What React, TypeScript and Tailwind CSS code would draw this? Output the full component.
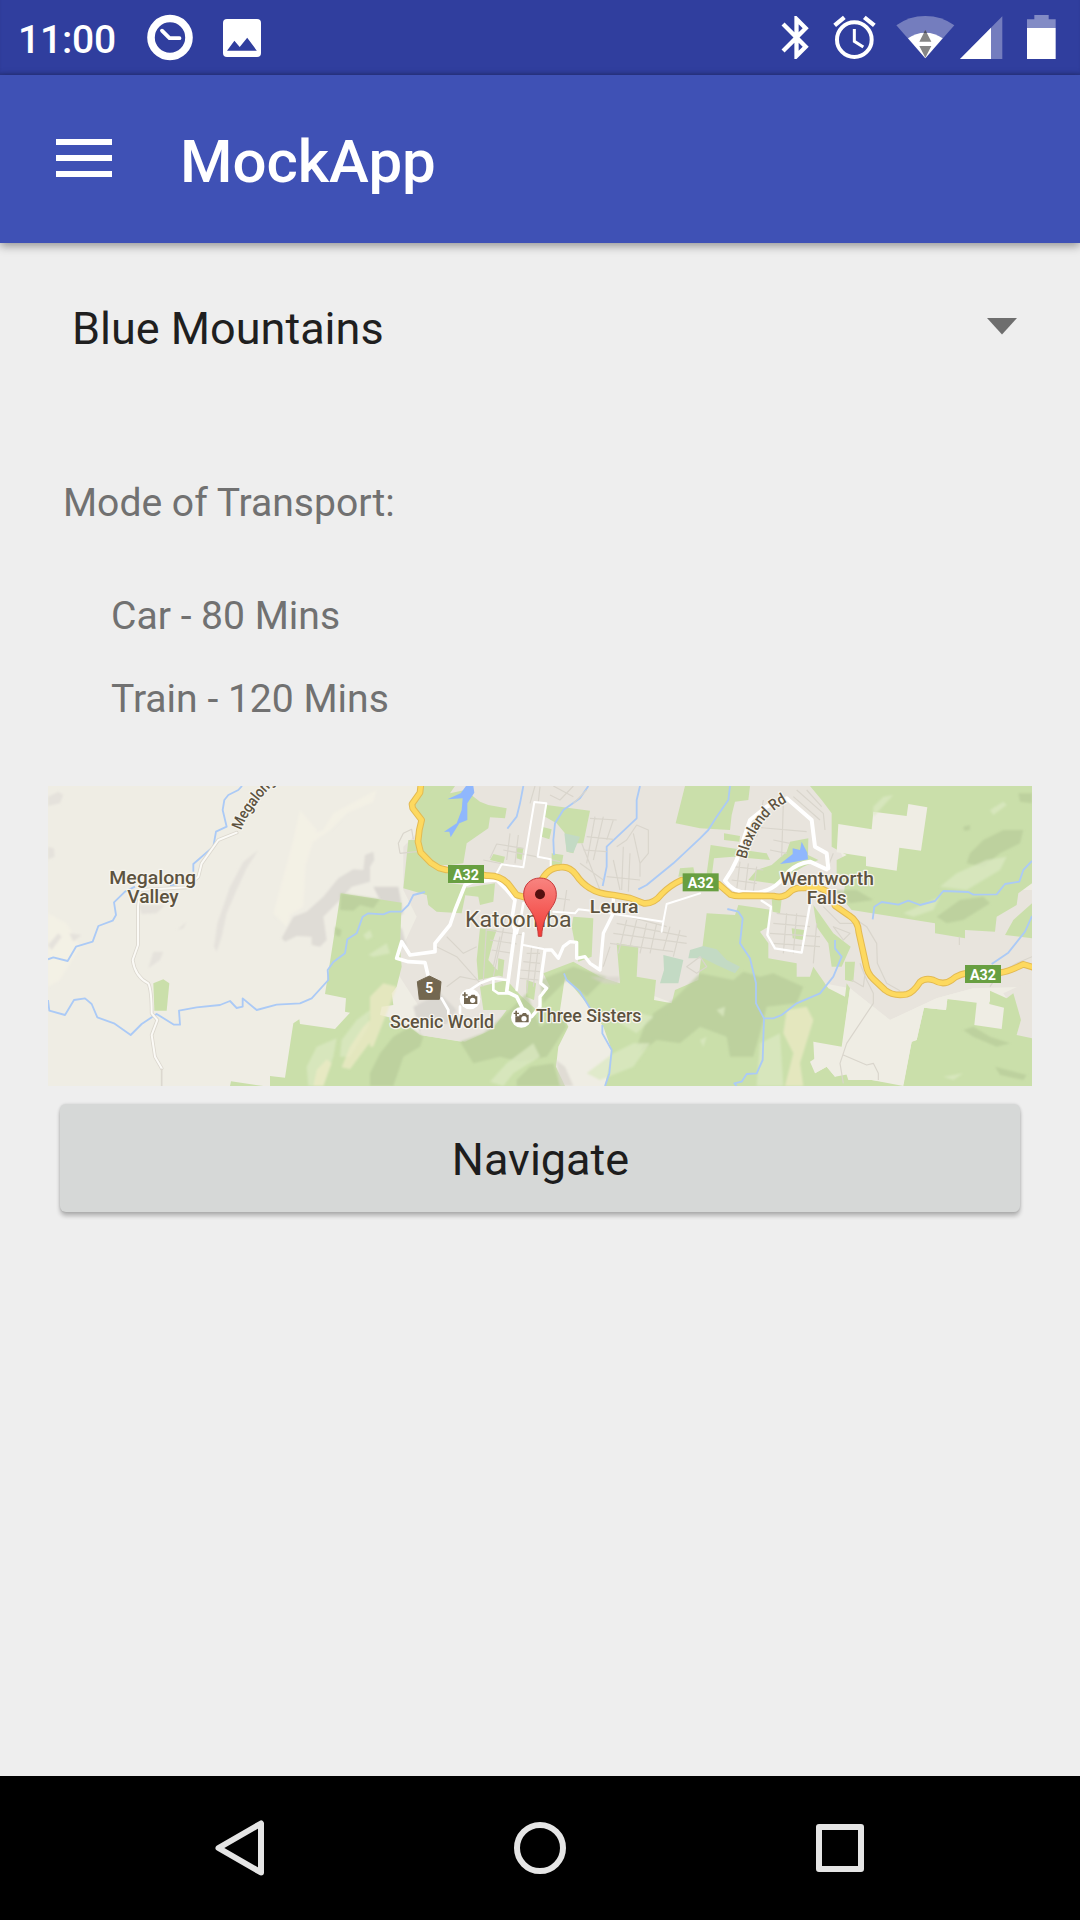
import React from "react";

function StatusBar() {
  return (
    <div className="flex h-[75px] items-start bg-[#303e9e] text-white shadow-[inset_0_-3px_3px_-1px_rgba(0,0,0,0.14)]">
      <span className="ml-[18px] mt-[15px] w-[100px] whitespace-nowrap text-[39px] font-medium leading-[50px] tracking-[-0.2px]">11:00</span>
      <svg className="ml-[28px] h-[75px] w-[48px]" viewBox="146 0 48 75" fill="none" stroke="#fff">
        <circle cx="170" cy="37.5" r="19" strokeWidth="7.6" />
        <path d="M162 30.7 169.5 38.2H179.5" strokeWidth="3.8" strokeLinecap="round" strokeLinejoin="round" />
      </svg>
      <svg className="ml-[28px] h-[75px] w-[40px]" viewBox="222 0 40 75">
        <rect x="223" y="19" width="38" height="38" rx="4" fill="#fff" />
        <path d="M227 50.7 234.4 40.7 239.7 47 247.2 37.7 256.8 50.7z" fill="#303e9e" />
      </svg>
      <div className="ml-auto mr-[24px] flex">
        <svg className="mr-[24px] h-[75px] w-[28px]" viewBox="64 0 84 225" fill="#fff">
          <path transform="translate(33.5 35.5) scale(6.42)" d="M17.71 7.71 12 2h-1v7.59L6.41 5 5 6.41 10.59 12 5 17.59 6.41 19 11 14.41V22h1l5.71-5.71-4.3-4.29 4.3-4.29zM13 5.83l1.88 1.88L13 9.59V5.83zm1.88 10.46L13 18.17v-3.76l1.88 1.88z" />
        </svg>
        <svg className="mr-[20px] h-[75px] w-[43px]" viewBox="219 0 129 225" fill="none" stroke="#fff">
          <circle cx="283" cy="119" r="52" strokeWidth="12" />
          <path d="M283 87V124L310 141" strokeWidth="9" />
          <path d="M224 76 253 52M313 52 343 76" strokeWidth="13" />
        </svg>
        <svg className="mr-[5px] h-[75px] w-[59px]" viewBox="407 0 177 225">
          <path d="M495 175 408 76Q446 48 495 48T582 76z" fill="#fff" opacity=".33" />
          <path d="M495 175 443 115Q466 98 495 98T547 115z" fill="#fff" />
          <path d="M495 90 513 125H477zM477 138H513L495 173z" fill="#858585" />
          <path d="M495 90 500 99H490z" fill="#4b4d66" />
        </svg>
        <svg className="mr-[24px] h-[75px] w-[43px]" viewBox="598 0 129 225" fill="#fff">
          <path d="M598 177 725 49V177z" opacity=".33" />
          <path d="M598 177 691 83V177z" />
        </svg>
        <svg className="h-[75px] w-[29px]" viewBox="801 0 87 225" fill="#fff">
          <path d="M823 45H866V58H887V84H801V58H823z" opacity=".4" />
          <path d="M801 84H887V177H801z" />
        </svg>
      </div>
    </div>
  );
}

const HIGHWAY_WEST =
  "M1143 10 1140 38 1116 72 1118 85 1145 120 1138 150 1134 185 1142 217 1172 248 1197 264 1220 270H1270L1340 287Q1380 285 1405 312L1430 345 1460 353";
const HIGHWAY_MID =
  "M1500 310Q1522 262 1560 262 1588 257 1608 284 1625 310 1650 325 1675 342 1720 345L1770 354 1812 370Q1842 372 1865 342 1890 316 1925 300L2035 312 2072 344Q2090 350 2110 347L2200 348Q2230 356 2248 338 2262 322 2290 324L2335 322 2362 334";
const HIGHWAY_EAST =
  "M2385 377 2428 407Q2454 423 2456 455L2478 555Q2482 580 2500 597L2535 630Q2560 650 2600 643 2620 638 2640 606 2655 593 2680 600 2710 618 2735 600 2760 578 2800 578H2880Q2905 575 2950 553L2980 562";

function Terrain() {
  return (
    <>
      <rect x="24" y="18" width="2952" height="900" fill="#efede4" />
      {/* built-up areas */}
      <path fill="#e8e4dd" d="M1150 18H2330L2385 100 2395 200 2450 330 2976 330V620L2800 625 2690 655 2550 720 2430 625 2300 600 2130 560 1980 610 1900 670 1740 610 1600 560 1480 740 1270 785 1140 765 1150 700 1060 560 1130 410 1090 330 1090 200 1140 150z" />
      <path fill="#e8e4dd" d="M2890 640 2976 600V790L2930 765 2943 720z" />
      {/* west hills */}
      <g filter="url(#soft)">
        <path fill="#f5f2e6" d="M1010 30 1000 65 920 100 870 150 800 200 790 380 740 410 735 360 765 200 800 170 850 150 880 100zM24 400 80 430 120 500 60 600 24 620zM700 400 760 180 780 90 830 150 740 440z" opacity=".7" />
        <path fill="#e5e2dc" d="M24 50 55 35 70 45 60 70 24 78zM24 200 42 205 44 230 24 238zM655 210 620 265 590 330 560 400 545 470 530 515 522 500 532 430 570 320 610 245zM24 495 55 460 65 470 35 510zM88 460 125 465 100 485zM340 515 370 515 360 540 325 565zM295 375 375 375 350 400 305 402zM412 450 440 425 430 445z" />
        <path fill="#dfdcd6" d="M725 475 760 410 800 395 850 350 895 295 940 268 970 270 975 225 1000 215 1003 240 990 260 990 305 935 320 900 360 850 410 860 480 840 500 815 495 815 470 770 468 735 485z" />
        <path fill="#dad7d1" d="M1000 320 1075 320 1090 400 1060 420 1020 360zM1050 440 1085 445 1100 500 1060 490zM1120 680 1200 640 1250 690 1200 760 1140 760z" />
      </g>
      {/* forests */}
      <g fill="#cadfaa">
        <path d="M1145 18H1245L1230 40 1275 30 1320 65 1345 75 1400 85 1395 115 1350 112 1345 145 1280 190 1270 250 1230 255 1190 255 1140 215 1145 130 1115 80z" />
        <path d="M1105 180 1140 180 1145 220 1195 265 1225 275V310L1280 315 1275 350 1265 400 1190 395 1165 375 1160 345 1090 325z" />
        <path d="M1270 325 1365 310 1360 365 1320 375 1315 350 1270 345zM1350 240 1360 222 1395 230 1390 250zM1430 200 1450 205 1445 240 1430 235z" />
        <path d="M1520 75 1650 92 1630 190 1608 190 1600 220 1580 215 1575 160 1550 130 1515 110zM1505 140 1535 148 1528 178 1505 170zM1535 220 1570 225 1565 255 1535 255z" />
        <path d="M1935 18H2130L2125 60 2085 65 2075 105 2070 150 1980 145 1907 130z" />
        <path d="M1600 410 1660 415 1655 530 1615 545 1595 440zM1320 445 1370 450 1360 480 1345 540 1385 585 1315 600 1310 540zM1375 535 1393 540 1388 590 1372 585zM1460 600 1488 610 1482 660 1458 650z" />
        <path d="M1920 265 1960 262 1965 285 1915 290zM2052 160 2100 168 2098 185 2052 180zM2012 195 2180 220 2190 240 2080 230 2022 235 2015 290 2000 280z" />
        <path d="M2125 300 2150 270 2195 255 2240 215 2250 185 2305 175 2304 225 2335 240 2290 260 2240 290 2210 312zM2195 355 2225 358 2220 400 2198 395zM2320 375 2380 460 2432 500 2405 560 2375 560 2365 490 2330 440zM2255 445 2292 450 2288 480 2258 475zM2415 545 2445 545 2440 605 2415 600z" />
        <path d="M2310 18H2976V310L2935 340 2930 375 2870 410 2865 455 2775 450V475L2685 460V430L2435 390 2410 360 2415 310 2390 300 2390 240 2420 225 2375 200V100L2345 60z" />
        <path d="M2895 465 2920 420 2976 370V475z" />
        <path d="M340 610 370 598 388 610 380 692H343z" />
        <path d="M570 918 573 904 670 918zM690 918V888L735 893 760 730 778 718 780 732 885 747 930 698 915 695 918 655 855 642 902 340 1085 368 1080 500 1085 560 1070 620 1055 640 1060 675 1025 680 1020 705 1080 720 1140 765 1265 785 1280 740 1360 745 1400 690 1330 690 1320 620 1400 600 1440 645 1500 700 1500 640 1530 620 1510 580 1600 545 1680 590 1740 610 1730 490 1795 500 1790 590 1848 600 1842 660 1895 670 1905 630 1975 600 1980 560 2000 400 2085 405 2095 375 2195 390 2185 440 2160 455 2185 490V535L2270 550V590H2310L2320 560 2365 625 2415 650 2420 610 2430 625 2405 820 2320 785 2355 815 2310 845 2325 880 2360 860 2385 890 2415 870 2425 900 2495 900 2590 918z" />
        <path d="M2590 918 2615 785 2630 780 2652 683 2718 690 2722 657 2810 668 2803 735 2885 747 2892 683 2848 672 2850 632 2900 655 2920 640 2943 720 2930 765 2976 775V918z" />
      </g>
      {/* clearings */}
      <path fill="#efede4" d="M2395 132 2495 148 2500 95 2600 108 2605 72 2662 82 2643 212 2578 203 2570 272 2478 258V230L2390 217zM2430 625 2550 720 2690 655 2800 625 2850 632V665L2722 657 2718 690 2652 683 2630 780 2615 785 2590 912 2495 900 2485 870 2440 880 2385 890 2360 860 2325 880 2320 785 2405 800z" />
      <path fill="#efede4" d="M1575 590 1560 690 1585 740 1555 800 1548 860 1575 918H1695L1715 810 1690 740 1640 670z" />
      <path fill="#e8e4dd" d="M1260 740 1365 745 1275 785 1140 765 1145 720z" />
      {/* relief */}
      <g filter="url(#soft)">
        <g fill="#b4c896" opacity=".6">
          <path d="M902 340 1020 358 1000 385 960 375 940 392 900 390zM885 440 905 450 900 470 885 465z" />
          <path d="M990 918V880L1020 820 1060 770 1110 740 1150 770 1140 800 1090 830 1060 918z" />
          <path d="M1260 785 1330 760 1400 700 1460 640 1500 740 1560 700 1580 740 1520 830 1440 845 1380 830 1300 850z" />
          <path d="M1430 900 1470 860 1540 850 1560 918H1430zM1500 600 1600 560 1700 590 1640 650 1580 600 1510 670z" />
          <path d="M1840 700 1900 660 1980 580 2080 600 2110 575 2160 590 2200 580 2290 620 2270 670 2180 680 2160 760 2140 830 2070 830 2060 770 1980 740 1920 790 1850 780 1800 820z" />
          <path d="M2790 220 2830 180 2890 150 2950 150 2940 190 2880 220 2830 260 2780 250zM2690 410 2760 360 2830 350 2850 370 2770 420 2720 430zM2370 330 2450 330 2500 360 2430 370zM2770 140 2790 135 2790 150 2772 152z" />
          <path d="M2770 750 2800 740 2850 770 2910 790 2870 800 2800 770zM2865 860 2960 885 2950 900 2880 885zM1820 720 1900 700 1900 740 1790 800zM2935 40 2976 40V70L2940 65z" />
        </g>
        <g fill="#dbe9c2" opacity=".75">
          <path d="M800 860 830 800 890 775 880 830 850 918H805zM905 780 950 720 990 690 985 740 930 830 900 830zM970 465 990 450 998 470 980 480zM985 525 1040 490 1050 520 1000 530z" />
          <path d="M1350 905 1400 850 1480 790 1500 830 1420 880 1390 918zM1640 880 1720 820 1780 790 1830 790 1780 860 1680 900zM1740 730 1800 700 1840 710 1790 760z" />
          <path d="M2160 790 2220 760 2230 918H2150zM2030 690 2055 680 2050 710zM2500 80 2530 50 2560 45 2500 110zM2700 320 2750 280 2840 240 2900 230 2880 270 2780 330zM2590 400 2700 350 2680 390 2620 410zM2850 90 2890 65 2900 75 2860 105zM2710 890 2770 880 2740 900zM1980 780 2000 770 1990 800z" />
        </g>
        <g fill="#eceac6" opacity=".75">
          <path d="M820 918 830 870 860 838 875 850 850 918zM905 862 930 800 970 740 1020 690V750L980 800 930 868zM2240 690 2300 680 2320 720 2280 850 2290 918H2235L2260 820 2230 760z" />
          <path d="M990 650 1030 610 1070 620 1040 700 1000 800 990 800z" />
        </g>
        <path fill="#d5d0c9" opacity=".6" d="M1650 590 1740 590 1735 612 1690 610zM1548 840 1575 860 1600 918H1560z" />
      </g>
      {/* gardens */}
      <path fill="#c3dac4" d="M1870 525 1930 540 1915 610 1860 610 1872 570zM1950 510 1990 498 2030 508 2060 540 2100 560 2085 580 2030 555 1990 535 1945 535zM1573 160 1620 170 1600 218 1580 215z" />
    </>
  );
}

function Water() {
  return (
    <>
      <path fill="#8fb7fd" d="M1278 18H1300L1303 38 1282 70 1282 120 1258 130 1232 172 1228 155 1212 155 1250 130 1265 90 1268 55 1222 58 1262 40zM2220 252 2258 222 2258 205 2280 210 2285 185 2302 218 2304 238 2250 248z" />
      <g fill="none" stroke="#abcaf6" strokeWidth="5.5" strokeLinejoin="round">
        <path d="M606 18 595 30 565 45 553 60 548 90 560 140 528 155 520 200 460 252V275M415 312 390 316M285 320 255 335 222 367 228 405 218 422 175 438 158 485 108 500 83 543 40 532 24 538" />
        <path d="M24 660 28 692 75 705 102 660 135 655 155 672 172 712 222 730 272 765 305 732 350 702 402 734H420L417 692 470 682 540 675 570 663 590 684 608 680V655L650 690 710 674 780 670 815 655 865 600 863 570 880 546 915 520 922 478 950 460 968 410 985 400 1030 403 1050 395 1085 395 1105 375 1120 345 1155 336" />
        <path d="M1450 18 1440 70 1430 110 1402 146M1645 18 1620 55 1570 90 1545 130 1540 180 1542 225M1800 18 1790 60V115L1700 200V260L1688 318M2070 18 2065 60 2030 110 2005 150 1980 175 1900 250 1820 315 1795 328" />
        <path d="M1572 580 1580 600 1620 635 1650 685M1687 735V760L1715 810 1708 880 1695 918" />
        <path d="M2062 387 2095 395 2108 415 2100 490 2130 535 2148 610V670L2172 715 2200 715 2225 705 2270 670 2340 640 2380 590 2405 530 2385 505V480M2172 715 2168 840 2150 880 2120 882 2105 905 2083 910 2090 918" />
        <path d="M2498 418 2503 380 2525 366 2575 374 2605 362 2640 375 2685 363 2710 333 2785 336 2800 344 2870 343 2895 312 2938 305 2950 270 2976 243M2855 552 2905 518 2955 455 2976 408" />
      </g>
    </>
  );
}

function Roads() {
  return (
    <>
      <g fill="none" stroke="#d9d5cc" strokeWidth="3.5" strokeLinejoin="round">
        <path d="M1080 220 1075 190 1090 160 1115 148 1120 178M1130 215 1080 220M1350 235 1370 192 1450 205M1330 240 1440 262M1410 160 1400 240M1435 165 1425 250M1390 210 1560 245M1600 18 1560 60 1530 45M1640 30 1600 70M1540 18 1600 50M1485 18 1470 70M1500 20 1495 65" />
        <path d="M1650 115 1730 120M1665 110 1640 250M1690 110 1660 240M1720 120 1700 180M1640 170 1720 178M1630 210 1700 215M1620 250 1690 300M1625 190 1680 330M1730 200 1760 180 1790 135 1825 150 1825 220 1800 250 1800 290M1720 240 1740 330M1750 200 1745 330M1770 220 1765 335M1700 290 1800 300M1780 160 1800 250" />
        <path d="M1340 450 1450 465M1350 480 1430 492M1355 510 1420 520M1340 430 1330 600M1400 400 1360 590M1380 470 1360 560M1220 470 1270 520 1310 500M1190 500 1250 530 1330 620M1460 520 1500 520M1450 545 1500 550M1440 570 1500 575M1440 595 1495 600M1475 500 1460 640M1495 500 1480 620M1220 620 1260 590 1310 600" />
        <path d="M1730 400 1880 440M1730 430 1940 470M1720 460 1940 490M1710 490 1900 515M1760 420 1735 520M1790 420 1770 500M1820 430 1800 520M1850 430 1830 520M1890 440 1870 510M1920 450 1900 530M1580 330 1570 400M1520 350 1590 360M1710 500 1690 560M1940 560 1980 530 2000 560 1970 580z" />
        <path d="M2130 140 2300 155M2170 60 2150 170M2230 70 2225 230M2200 180 2250 190M2190 210 2240 220M2080 260 2170 270M2075 300 2150 310M2100 245 2090 330M2125 250 2115 335M2150 260 2140 335M2210 400 2300 410M2200 430 2310 440M2190 460 2340 470M2200 490 2340 500M2240 400 2230 520M2270 400 2260 520M2330 430 2320 550M2270 30 2350 100 2355 150M2300 30 2345 80M2260 50 2340 120M2380 220 2360 270M2350 380 2400 430 2440 430M2380 440 2430 460 2410 480z" />
        <path d="M2450 420 2480 440 2510 490 2512 550 2540 610 2580 632M2460 550 2480 600 2500 640V670L2420 790 2400 850 2410 910M2410 825 2480 855 2500 850 2515 880V900M2435 600 2470 620 2475 580M2830 600 2880 580 2930 550 2976 530M2758 470V495M2850 620 2870 590" />
      </g>
      <g fill="none" strokeLinejoin="round" strokeLinecap="round">
        <path stroke="#dcd8cf" strokeWidth="11" d="M590 158 535 180 485 250 475 290 440 322 300 330 294 380V495L278 540Q285 590 325 610 335 630 335 700L352 720 335 765 345 830 365 865" />
        <path stroke="#fbfaf6" strokeWidth="6" d="M590 158 535 180 485 250 475 290 440 322 300 330 294 380V495L278 540Q285 590 325 610 335 630 335 700L352 720 335 765 345 830 365 865" />
        <path stroke="#dcd8cf" strokeWidth="5" d="M365 868V918" />
        <g stroke="#fff" strokeWidth="12">
          <path d="M1165 590 1155 548 1105 545 1070 535 1085 485 1110 525 1185 515 1185 490 1230 435 1245 390 1275 315 1300 305 1370 300 1400 330 1425 360 1415 420 1425 450 1400 635 1430 650 1450 690" strokeWidth="11" />
          <path d="M1290 630 1320 610 1360 595 1400 600M1360 600V630L1375 640 1410 640M1430 460 1445 400 1450 370M1450 460 1430 630M1205 655 1225 690V705M1260 700V680" strokeWidth="8" />
          <path d="M1475 710 1500 680V650L1520 625 1502 610 1505 580 1515 510 1535 510 1555 535 1570 500 1590 485 1610 487V535L1635 530 1650 550 1680 570 1690 460 1720 400V355" strokeWidth="10" />
          <path d="M1370 280 1385 253 1450 262 1483 66 1519 70 1493 230 1532 238V260M1450 495 1510 507M1540 395 1605 400 1615 388 1680 395 1870 425 1880 372 1980 340M1870 425 1865 455" strokeWidth="6" />
          <path d="M2055 302 2075 270 2090 240 2130 120 2180 80 2240 55 2315 120 2325 200 2360 220 2365 265M2055 302Q2080 338 2120 337 2180 345 2220 305L2245 275Q2270 250 2310 245L2360 268" />
          <path d="M2165 362 2193 380 2182 465 2205 505 2285 518 2312 360" strokeWidth="7" />
        </g>
        <g stroke="#e3ba52" strokeWidth="20"><path d={HIGHWAY_WEST} /><path d={HIGHWAY_MID} /><path d={HIGHWAY_EAST} /></g>
        <g stroke="#fdd95f" strokeWidth="14"><path d={HIGHWAY_WEST} /><path d={HIGHWAY_MID} /><path d={HIGHWAY_EAST} /></g>
      </g>
    </>
  );
}

function Shield({ x, y }: { x: number; y: number }) {
  return (
    <g>
      <rect x={x} y={y} width="108" height="54" fill="#689f41" />
      <text x={x + 54} y={y + 44} textAnchor="middle" fontSize="46" fontWeight="700" fill="#fff" textLength="78" lengthAdjust="spacingAndGlyphs">A32</text>
    </g>
  );
}

function Camera({ x, y }: { x: number; y: number }) {
  return (
    <g transform={`translate(${x} ${y})`}>
      <circle r="31" fill="#fff" />
      <path fill="#736751" fillRule="evenodd" d="M-18 12V-3H-6V-8H1L5-13H14L17-8H22V15H-18zM8-4A8 8 0 1 0 8 12 8 8 0 1 0 8-4zM-18-20H-13V-14H-7V-10H-13V-4H-18V-10H-23V-14H-18z" />
    </g>
  );
}

function MapView() {
  return (
    <svg className="block h-[300px] w-[984px]" viewBox="24 18 2952 900">
      <defs>
        <filter id="soft"><feGaussianBlur stdDeviation="3" /></filter>
        <linearGradient id="pin" x1="0" y1="0" x2="0" y2="1">
          <stop offset="0" stopColor="#f88480" />
          <stop offset="1" stopColor="#f23b36" />
        </linearGradient>
        <path id="megalong" d="M604 152Q620 95 708 5" />
        <path id="blaxland" d="M2119 238Q2150 112 2245 64" />
      </defs>
      <Terrain />
      <Water />
      <Roads />
      <Shield x={1224} y={255} />
      <Shield x={1928} y={280} />
      <Shield x={2775} y={555} />
      <path d="M1168 588 1203 605 1198 658H1138L1132 605z" fill="#736750" stroke="#736750" strokeWidth="3" strokeLinejoin="round" />
      <text x="1168" y="639" textAnchor="middle" fontSize="42" fontWeight="700" fill="#fff">5</text>
      <Camera x={1290} y={657} />
      <Camera x={1444} y={712} />
      <g fill="#5d5340" stroke="#f7f5ef" strokeWidth="8" strokeLinejoin="round" className="[paint-order:stroke]" fontWeight="500" fontSize="57">
        <text x="208" y="311" textLength="260" lengthAdjust="spacingAndGlyphs">Megalong</text>
        <text x="262" y="369" textLength="154" lengthAdjust="spacingAndGlyphs">Valley</text>
        <text x="2220" y="314" textLength="282" lengthAdjust="spacingAndGlyphs">Wentworth</text>
        <text x="2300" y="373" textLength="120" lengthAdjust="spacingAndGlyphs">Falls</text>
        <text x="1649" y="398" textLength="147" lengthAdjust="spacingAndGlyphs">Leura</text>
        <text x="1275" y="440" textLength="320" lengthAdjust="spacingAndGlyphs" fontSize="67" fontWeight="400">Katoomba</text>
        <g fontSize="55">
          <text x="1050" y="745" textLength="312" lengthAdjust="spacingAndGlyphs">Scenic World</text>
          <text x="1488" y="725" textLength="316" lengthAdjust="spacingAndGlyphs">Three Sisters</text>
        </g>
        <g fontSize="46" strokeWidth="7">
          <text><textPath href="#megalong" textLength="182" lengthAdjust="spacingAndGlyphs">Megalong</textPath></text>
          <text><textPath href="#blaxland" textLength="218" lengthAdjust="spacingAndGlyphs">Blaxland Rd</textPath></text>
        </g>
      </g>
      <path d="M1500 294C1529 294 1549 315 1549 343 1549 371 1531 383 1519 408 1509 432 1506 447 1505 469H1495C1494 447 1491 432 1481 408 1469 383 1451 371 1451 343 1451 315 1471 294 1500 294z" fill="url(#pin)" stroke="#c7393a" strokeWidth="3" />
      <circle cx="1500" cy="343" r="15" fill="#54100f" />
    </svg>
  );
}

function NavBar() {
  return (
    <div className="flex h-36 items-center justify-between bg-black px-[210px]">
      <svg className="h-[60px] w-[60px]" viewBox="210 1818 60 60" fill="none" stroke="#e5e5e5" strokeWidth="6" strokeLinejoin="round">
        <path d="M261 1823.5V1872.5L218.5 1848z" />
      </svg>
      <svg className="h-[60px] w-[60px]" viewBox="0 0 60 60" fill="none" stroke="#e5e5e5" strokeWidth="6">
        <circle cx="30" cy="30" r="23" />
      </svg>
      <svg className="h-[60px] w-[60px]" viewBox="0 0 60 60" fill="none" stroke="#e5e5e5" strokeWidth="6" strokeLinejoin="round">
        <rect x="9" y="9" width="42" height="42" />
      </svg>
    </div>
  );
}

export default function App() {
  return (
    <div className="flex h-[1920px] w-[1080px] flex-col overflow-hidden bg-[#eeeeee] font-[Roboto,sans-serif]">
      <StatusBar />
      <header className="flex h-[168px] shrink-0 items-center bg-[#3f51b5] shadow-[0_3px_9px_rgba(0,0,0,0.38)]">
        <div className="mb-[2px] ml-14 flex w-14 flex-col gap-[10px]">
          <div className="h-[6px] bg-white" />
          <div className="h-[6px] bg-white" />
          <div className="h-[6px] bg-white" />
        </div>
        <h1 className="ml-[68px] mt-[5px] text-[60px] font-medium leading-[70px] text-white">MockApp</h1>
      </header>
      <main className="flex flex-1 flex-col">
        <div className="flex h-[173px] items-start justify-between pl-[72px] pr-[63px] pt-[58px]">
          <span className="text-[45px] leading-[56px] text-[#1f1f1f]">Blue Mountains</span>
          <svg className="mt-[17px] h-[17px] w-[30px]" viewBox="0 0 30 17"><path d="M0 0H30L15 16.5z" fill="#6e6e6e" /></svg>
        </div>
        <div className="h-[370px] pl-[63px] pt-[62px] text-[39.1px] leading-[50px] text-[#717171]">
          <p>Mode of Transport:</p>
          <ul className="flex flex-col gap-[33px] pl-12 pt-[63px]">
            <li>Car - 80 Mins</li>
            <li>Train - 120 Mins</li>
          </ul>
        </div>
        <div className="px-12">
          <MapView />
        </div>
        <button className="mx-[60px] mt-[18px] h-[108px] rounded-[6px] bg-[#d6d8d7] pl-px pt-[4px] text-[45px] leading-[56px] text-[#1d1d1d] shadow-[0_4px_4px_rgba(0,0,0,0.24),0_0_3px_rgba(0,0,0,0.14)]">Navigate</button>
      </main>
      <NavBar />
    </div>
  );
}
